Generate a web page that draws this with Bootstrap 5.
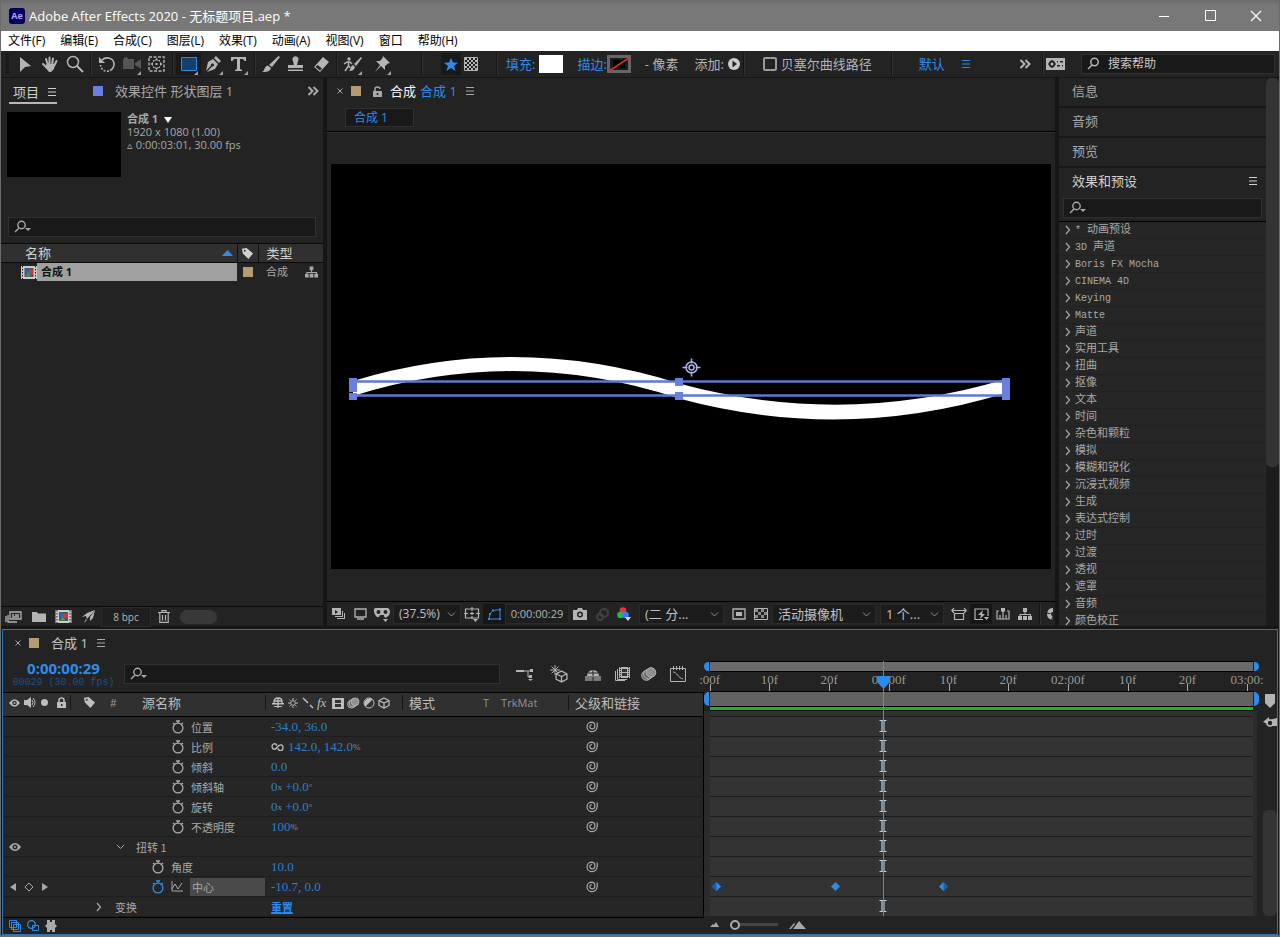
<!DOCTYPE html>
<html lang="zh-CN">
<head>
<meta charset="utf-8">
<meta name="viewport" content="width=device-width, initial-scale=1">
<title>Adobe After Effects 2020 - 无标题项目.aep *</title>
<link rel="stylesheet" href="https://cdn.jsdelivr.net/npm/bootstrap@5.3.0/dist/css/bootstrap.min.css">
<style>
:root{--panel:#232323;--gut:#161616;--well:#191919;--line:#0a0a0a;--txt:#a8a8a8;--hi:#d0d0d0;--blue:#2d8ceb;--num:#2c7fd0}
body{height:100vh;min-height:640px;overflow:hidden;background:var(--gut);color:var(--txt);border:solid #6c6c6c;border-width:0 1px 2px;font:13px/18px "Open Sans","Noto Sans CJK SC",sans-serif;font-weight:400}
button,input,select{font:inherit;color:inherit;background:none;border:0;padding:0;border-radius:0;outline:0}
svg{display:block;flex:none;fill:currentColor}
.ln{fill:none;stroke:currentColor}
a{color:inherit;text-decoration:none}
.titlebar{height:31px;background:linear-gradient(#6a6a6a,#787878 5px);color:#fff}
.aelogo{width:16px;height:16px;background:#00005b;color:#b0a0ff;border-radius:3px;font:bold 9px/16px "Open Sans",sans-serif}
.winbtn{width:46px;height:31px}
.menubar{height:20px;background:#fff;color:#000;font:12px/20px "Open Sans","Noto Sans CJK SC",sans-serif;gap:15px;padding-left:7px}
.toolbar{height:26px;background:var(--panel);color:#b4b4b4;margin-bottom:1px}
.tool{width:25px;height:22px;position:relative}
.tool.more::after{content:"";position:absolute;right:3px;bottom:0;border:solid transparent;border-width:0 0 4px 4px;border-bottom-color:#a0a0a0}
.tool.on{background:var(--well)}
.tool.tight{width:20px}
.tool.off{color:#555}
.vsep{flex:none;width:7px;height:22px;background:linear-gradient(90deg,transparent 3px,#151515 3px,#151515 4px,#323232 4px,#323232 5px,transparent 5px)}
.lnkblue{color:var(--blue)}
.swatch{width:24px;height:18px}
.tb-check{appearance:none;width:14px;height:14px;border:2px solid #999;border-radius:2px}
.well{background:var(--well);border:1px solid #303030;height:20px}
.well input{min-width:0;width:100%;height:18px}
.well input::placeholder{color:#c8c8c8;opacity:1}
.helpfind{width:194px;font-size:12px}
.workspace{min-height:0}
.pane{background:var(--panel)}
.project{width:322px}
.ptab{height:26px}
.sq{width:10px;height:10px;flex:none}
.tan{background:#b39c74}
.blu{background:#657fe2;margin-left:36px}
.curtab{height:22px;border-bottom:2px solid #b8b8b8;color:var(--hi)}
.thumb{width:114px;height:65px;background:#000}
.meta{font-size:11px;line-height:13px;padding-left:6px}
.projfind{margin:40px 7px 6px}
.ptable{width:100%;table-layout:fixed;border-collapse:collapse}
.ptable th{height:19px;background:#303030;border:solid var(--line);border-width:1px 0;font-weight:400;color:var(--hi);line-height:17px;padding:0}
.ptable td{height:19px;padding:0;font-size:11px;line-height:18px}
.ptable th+th{border-left:1px solid #111}
.c-name{width:236px}.c-tag{width:21px}.c-flow{width:18px}
.selname{background:#a0a0a0;color:#111;font-weight:700;height:18px}
.pfoot{height:20px;border-top:1px solid var(--line);color:#b4b4b4}
.icell{width:25px;height:19px}
.icell,.vcell,.tool,.winbtn{display:flex;align-items:center;justify-content:center;flex:none}
.blob{width:37px;height:14px;border-radius:7px;background:#383838}
.comptab{width:69px;height:19px;background:var(--well);border:1px solid #303030;font-size:12px;line-height:16px}
.comprow{padding:0 0 4px 18px}
.viewer{border-top:1px solid #000;min-height:0;box-shadow:inset 0 1px #303030}
.canvas{background:#000;width:100%;aspect-ratio:16/9}
.vfoot{height:25px;border-top:1px solid #000;color:#b4b4b4}
.vcell{width:22px;height:20px}
.vcell.on{background:#161616}
.vcell.off{color:#404040}
.vsel{height:20px;background:#1c1c1c url("data:image/svg+xml,%3Csvg xmlns='http://www.w3.org/2000/svg' width='9' height='5'%3E%3Cpath d='M1 .5l3.500 3.500 3.500-3.500' fill='none' stroke='%23909090'/%3E%3C/svg%3E") no-repeat right 4px center;border:1px solid #2b2b2b;appearance:none;padding-left:5px;color:#c0c0c0;line-height:18px;flex:none}
.w-mag{width:68px;font-size:12px}.w-res{width:85px}.w-cam{width:104px}.w-num{width:64px}
.tcbox{width:72px;height:20px;background:#1f1f1f;border:1px solid #2b2b2b;font-size:11px}
.bpc{width:50px;font-size:10px}
.rightcol{width:220px}
.prow{height:30px;padding:0 0 2px 13px;border-bottom:2px solid #171717}
.prow.cur{border:0;padding-bottom:4px;color:var(--hi)}
.fxfind{margin:0 4px 3px}
.fxlist{font:11px/16px "Liberation Mono","Noto Sans CJK SC",monospace;border-top:1px solid #000;min-height:0;flex-basis:0;background:#262626}
.fxlist li{height:17px;border-bottom:1px solid #212121;padding-left:6px;gap:4px;display:flex;align-items:center}
.en{font-size:10px;white-space:pre}
.sbar{width:13px;background:#1c1c1c}
.sthumb{background:#343434;border-radius:5px}
.sbar .sthumb{height:71%}
.timeline{margin:3px 1px 0;border:1px solid #2a72c0;background:var(--panel)}
.tleft{flex:0 0 55%;min-width:0}
.tctop{height:36px}
.tcwrap{width:121px}
.tcode{font:bold 15px/16px "Open Sans",sans-serif;color:var(--blue)}
.tsub{font:10px/13px "Liberation Mono",monospace;color:#1c5088}
.tics{color:#b4b4b4}
.tic{display:flex;justify-content:center;width:34px}
.tic.n{width:26px}
.trow{display:grid;grid-template-columns:67px 195px 137px 166px 1fr;height:20px;align-items:center;border-bottom:1px solid #1e1e1e;border-right:1px solid #000;background:#262626;font:11px/18px "Noto Sans CJK SC",sans-serif}
.trow>div{display:flex;align-items:center}
.thead{height:25px;background:#303030;border:solid #000;border-width:1px 1px 1px 0;padding-bottom:4px;font:13px/18px "Open Sans","Noto Sans CJK SC",sans-serif;color:#bdbdbd}
.thead>div+div{border-left:1px solid #161616;height:15px}
.nv{font:13px/18px "Liberation Serif",serif;color:var(--num);padding-left:6px;white-space:pre}
.nv small{font-size:9px;color:#8a8a8a}
.reset{font:bold 11px/18px "Noto Sans CJK SC",sans-serif;text-decoration:underline}
.tiny{font-size:11px;color:#939393}
.swi{gap:3px}
.fxi{width:12px;font:italic 13px/12px "Liberation Serif",serif}
.c-t{width:32px;padding-left:12px}.c-h{width:29px;padding-left:4px}
.c-n{padding-left:10px}
.l0{padding-left:26px;gap:13px}.l1{padding-left:46px;gap:11px}.l2{padding-left:82px;gap:7px}.l3{padding-left:102px;gap:7px}
.pick{padding-left:18px;color:#aaa}
.hl{background:#4a4a4a;height:18px;padding-left:2px}
.pl{padding-left:6px}
.tfoot{height:17px;border-top:1px solid #000;gap:6px}
.tright{padding-left:6px;min-width:0}
.tright .tfoot{border:0;gap:11px}
.nav-strip{height:11px;border:solid #000;border-width:1px 0;background:#6a6a6a;margin-top:31px}
.work{height:16px;border:solid #000;border-width:1px 0;background:#626262}
.nub{position:absolute;top:0;bottom:0;width:5px;background:var(--blue)}
.nub.s{left:-6px;border-radius:5px 0 0 5px}.nub.e{right:-6px;border-radius:0 5px 5px 0}
.ruler{height:19px;font:13px/16px "Liberation Serif",serif;color:#999}
.at{position:absolute;left:calc(var(--f)/91*100%);width:40px;margin-left:-20px;text-align:center}
.ruler .at::after{content:"";position:absolute;left:20px;top:12px;height:7px;width:1px;background:#aaa}
.green{height:4px;background:#22b030;border-bottom:1px solid #111}
.tracks{background:#333;box-shadow:-6px 0 #2c2c2c,4px 0 #2c2c2c;border-top:5px solid #303030}
.track{height:20px;border-top:1px solid #1d1d1d;position:relative}
.track svg{position:absolute;color:var(--blue)}
.track .beam{left:calc(29/91*100%);margin-left:-5px;top:2px;color:#b8cfe2}
.track .key{left:calc(var(--f)/91*100%);margin-left:-4px;top:5px}
.playhead{position:absolute;left:calc(29/91*100%);top:31px;bottom:0;width:1px;background:#3b93ea;z-index:2}
.playhead svg{position:absolute;left:-6px;top:15px;color:var(--blue)}
.tside{width:24px}
.marks{height:180px;padding-top:64px;gap:7px;color:#b4b4b4}
.tside .sthumb{width:14px;height:106px}
.zoomr{appearance:none;width:48px;height:10px}
.zoomr::-webkit-slider-runnable-track{height:3px;background:#454545}
.zoomr::-webkit-slider-thumb{appearance:none;width:10px;height:10px;border:2px solid #aaa;border-radius:50%;background:var(--panel);margin-top:-3px}
</style>
</head>
<body class="d-flex flex-column">
<svg width="0" height="0" class="position-absolute" aria-hidden="true"><defs>
<symbol id="menu" viewBox="0 0 10 10"><path d="M1 1h8v1H1zM1 4.500h8v1H1zM1 8h8v1H1z"/></symbol>
<symbol id="chev2" viewBox="0 0 12 10"><path class="ln" stroke-width="2" d="M1.500 1l4 4-4 4M6.500 1l4 4-4 4"/></symbol>
<symbol id="find" viewBox="0 0 18 14"><g class="ln" stroke-width="1.500"><circle cx="8.500" cy="5" r="3.700"/><path d="M6 8L2 12"/></g></symbol>
<symbol id="findm" viewBox="0 0 18 14"><g class="ln" stroke-width="1.400"><circle cx="8.500" cy="5" r="3.700"/><path d="M6 8L2 12"/></g><path d="M12 8h6l-3 3z"/></symbol>
<symbol id="tag" viewBox="0 0 14 14"><path d="M1 2l5-1 7 6-5 6-6-6zM4 3a1 1 0 100 2 1 1 0 000-2" fill-rule="evenodd"/></symbol>
<symbol id="film" viewBox="0 0 16 13"><path fill="#ccc" d="M0 0h16v13H0z"/><path stroke="#222" stroke-dasharray="1.500 1.500" d="M1.500 0v13M14.500 0v13"/><path fill="#555" d="M3.500 2h9v9h-9z"/><circle cx="6.500" cy="5" r="2.300" fill="#2767c5"/><path fill="#d33" d="M8 4h4v4H8z"/><path fill="#3a9b48" d="M7 6l3 4.500H4.500z"/></symbol>
<symbol id="tree" viewBox="0 0 14 12"><path d="M5 0h4v4H5zM0 8h4v4H0zM5 8h4v4H5zM10 8h4v4h-4zM6.500 4h1v2h5.500v2h-1V7H2.500v1h-1V6h5z"/></symbol>
<symbol id="watch" viewBox="0 0 12 14"><g class="ln" stroke-width="1.300"><circle cx="6" cy="8" r="4.900"/><path d="M4 1h4M6 1v2M1 3l2 1.500M11 3L9 4.500"/></g></symbol>
<symbol id="whorl" viewBox="0 0 12 12"><path class="ln" stroke-width="1.200" d="M11.200 1.500V5.500Q10.500 10.600 6 10.600A4.700 4.700 0 0 1 5.500 1.200Q8.800 1.200 8.800 4.500V5.500Q8.500 7.900 6.300 7.900T3.900 5.700 6 3.800"/></symbol>
<symbol id="right" viewBox="0 0 6 10"><path class="ln" stroke-width="1.200" d="M1 1l3.500 4L1 9"/></symbol>
<symbol id="down" viewBox="0 0 9 6"><path class="ln" d="M1 1l3.500 3.500L8 1"/></symbol>
<symbol id="eye" viewBox="0 0 12 8"><path fill-rule="evenodd" d="M0 4q6-8 12 0-6 8-12 0zM6 1.500a2.500 2.500 0 100 5 2.500 2.500 0 000-5"/><circle cx="6" cy="4" r="1"/></symbol>
<symbol id="balls" viewBox="0 0 16 14"><g stroke="currentColor" fill="#666"><circle cx="5.500" cy="8.500" r="4.800"/><circle cx="7.500" cy="7" r="4.800"/><circle cx="10" cy="5.500" r="4.800" fill="#909090"/></g></symbol>
<symbol id="frames" viewBox="0 0 15 14"><path d="M4 0h11v11H4z"/><path fill="#333" d="M7 2h5v3H7zM7 6h5v3H7z"/><path stroke="#333" stroke-dasharray="1 1" d="M5.500 0v11M13.500 0v11"/><path class="ln" d="M2.500 2v10.500H12M.5 4v9.500H10"/></symbol>
<symbol id="cube" viewBox="0 0 12 12"><path class="ln" stroke-width="1.200" d="M6 1l5 2.500v5L6 11 1 8.500v-5zM1 3.500L6 6l5-2.500M6 6v5"/></symbol>
<symbol id="beam" viewBox="0 0 10 14"><path class="ln" stroke-width="1.200" d="M1.500 1.500h7M1.500 12.500h7M4 2v10M6 2v10"/></symbol>
<symbol id="shy" viewBox="0 0 12 11"><path class="ln" stroke-width="1.300" d="M2 6V4.500Q2 1 6 1T10 4.500V6M6 1v10M2.500 4h7"/><path d="M0 6h12v1.500H0zM2 9h8v1H2z"/></symbol>
</defs></svg>

<header class="titlebar d-flex align-items-center flex-shrink-0">
  <span class="aelogo ms-2 text-center">Ae</span><span class="ms-1 flex-grow-1">Adobe After Effects 2020 - 无标题项目.aep *</span>
  <button class="winbtn" aria-label="最小化"><svg width="10" height="10"><path d="M0 5h10v1H0z"/></svg></button>
  <button class="winbtn" aria-label="最大化"><svg width="11" height="11"><path class="ln" d="M.5.5h10v10H.5z"/></svg></button>
  <button class="winbtn" aria-label="关闭"><svg width="12" height="12"><path class="ln" stroke-width="1.200" d="M1 1l10 10M11 1L1 11"/></svg></button>
</header>
<nav class="menubar d-flex flex-shrink-0"><a href="#">文件(F)</a><a href="#">编辑(E)</a><a href="#">合成(C)</a><a href="#">图层(L)</a><a href="#">效果(T)</a><a href="#">动画(A)</a><a href="#">视图(V)</a><a href="#">窗口</a><a href="#">帮助(H)</a></nav>

<div class="toolbar d-flex align-items-center flex-shrink-0">
  <svg width="11" height="22"><path stroke="#111" stroke-width="3" stroke-dasharray="1 1" d="M6.500 1v20"/></svg>
  <button class="tool" aria-label="选取"><svg width="12" height="17"><path d="M1 1l11 9-6 1-5 5z"/></svg></button>
  <button class="tool" aria-label="手形"><svg width="18" height="17"><g class="ln" stroke-width="2" stroke-linecap="round"><path d="M5 3l2 6M8.500 1.500V9M12 2.500L11 9M15.500 5L13 10M2 8l4 4"/></g><path d="M5.500 8h8.500l-1 5-3 3H8l-4-5z"/></svg></button>
  <button class="tool" aria-label="缩放"><svg width="18" height="18"><g class="ln" stroke-width="1.500"><circle cx="7" cy="7" r="5.500"/><path d="M11 11l6 6" stroke-width="2"/></g></svg></button>
  <span class="vsep"></span>
  <button class="tool" aria-label="旋转"><svg width="18" height="16"><path class="ln" stroke-width="1.600" d="M4 4c4-4 12-2 12 4 0 3-1 5-4 6.500"/><path class="ln" stroke-width="1.600" stroke-dasharray="2 1.500" d="M11 15c-4 1-8-1-8.500-6"/><path d="M1 1v6h6z"/></svg></button>
  <button class="tool more off" aria-label="摄像机"><svg width="18" height="14"><path d="M0 2h11v10H0zM12 6l6-4v10l-6-4z"/><circle cx="3" cy="2" r="2"/></svg></button>
  <button class="tool" aria-label="向后平移"><svg width="17" height="16"><path class="ln" stroke-dasharray="3 1.500" stroke-width="1.400" d="M1 1h15v14H1z"/><path d="M8.500 2l2 2.500h-4zM8.500 14l-2-2.500h4zM2.500 8L5 6v4zM14.500 8L12 6v4zM7.500 7h2v2h-2zM5 4l1.500 1.500M5 4h2L5 6zM12 4v2l-2-2zM5 12v-2l2 2zM12 12h-2l2-2z"/></svg></button>
  <span class="vsep"></span>
  <button class="tool more on" aria-label="矩形"><svg width="16" height="14"><path fill="#123f6b" stroke="#2d8ceb" d="M.5.5h15v13H.5z"/></svg></button>
  <button class="tool more" aria-label="钢笔"><svg width="17" height="17"><path d="M11 0l5 5-2 2-5-5zM8 3l5 5-3 5-8 3 5-5.500a1.500 1.500 0 10-1-1L1 15l2-9z"/></svg></button>
  <button class="tool more" aria-label="文字"><svg width="15" height="16"><path d="M0 1h15v4h-1.500L12 3H9v10l2 1v1H4v-1l2-1V3H3L1.500 5H0z"/></svg></button>
  <span class="vsep"></span>
  <button class="tool" aria-label="画笔"><svg width="18" height="17"><path d="M16.500 0L18 1 10 11 7 9zM6 9.500L9 12c-1 4-5 4-9 4 3-1 2-6 6-6.500"/></svg></button>
  <button class="tool" aria-label="图章"><svg width="17" height="16"><path d="M6 5a3 3 0 115 0l-1 4h6v3H1V9h6zM1 13.500h15V15H1z"/></svg></button>
  <button class="tool" aria-label="橡皮擦"><svg width="18" height="17"><path d="M11 1l6 5-9 10-6-5zM3.500 11l4.500 3.500 2-2L5.500 9z" fill-rule="evenodd"/></svg></button>
  <span class="vsep"></span>
  <button class="tool more" aria-label="Roto 笔刷"><svg width="19" height="17"><path d="M18 1l1 1-6 8-2-2zM10 9l2 2c-1 4-4 4-6 4 2-1 1-5 4-6"/><circle cx="6" cy="3" r="1.700"/><path class="ln" stroke-width="1.500" d="M1 8l3-2h3l2 2M5.500 6v4L2 15M6 10l1 2"/></svg></button>
  <button class="tool more ms-1" aria-label="人偶位控点"><svg width="16" height="16"><path d="M9 0l7 7-2 .5L11 10v4L7 10l-6 6 5-7-4-4h4l2.500-3z"/></svg></button>
  <span class="vsep ms-4"></span>
  <button class="tool on tight ms-3 lnkblue" aria-label="形状"><svg width="14" height="13"><path d="M7 0l2 4.500 5 .2-4 3.200 1.500 5L7 10l-4.500 3 1.500-5L0 4.700l5-.2z"/></svg></button>
  <button class="tool tight me-1" aria-label="蒙版"><svg width="14" height="14"><path class="ln" d="M.5.5h13v13H.5z"/><path class="ln" stroke-width="2" stroke-dasharray="2 2" d="M1 2h12M3 4h12M1 6h12M3 8h10M1 10h12M3 12h10"/></svg></button>
  <span class="vsep ms-2"></span>
  <a href="#" class="lnkblue pl">填充:</a><span class="swatch bg-white ms-1"></span>
  <a href="#" class="lnkblue pl ms-2">描边:</a><svg width="24" height="18"><path fill="#1b1b1b" stroke="#666" stroke-width="3" d="M1.500 1.500h21v15h-21z"/><path fill="#000" d="M6 5h12v8H6z"/><path stroke="#c33" stroke-width="1.500" d="M2 16L22 3"/></svg>
  <span class="pl ms-2">- 像素</span><span class="ms-3">添加:</span>
  <button class="ms-1" aria-label="添加"><svg width="12" height="12"><circle cx="6" cy="6" r="6" fill="#ccc"/><path fill="#222" d="M4.500 2.500v7L9 6z"/></svg></button><span class="vsep"></span>
  <input type="checkbox" class="tb-check ms-3 me-1" id="bez"><label for="bez">贝塞尔曲线路径</label>
  <span class="vsep ms-3"></span>
  <a href="#" class="lnkblue ms-4">默认</a><svg class="lnkblue ms-3" width="10" height="10"><use href="#menu"/></svg>
  <span class="flex-grow-1"></span>
  <svg width="12" height="10"><use href="#chev2"/></svg><span class="vsep ms-2"></span>
  <svg width="19" height="12"><path fill-rule="evenodd" d="M0 0h19v12H0zM6 2L4 3 2 6l2 3 2 1 2-1 2-3-2-3zM11 3v1.500h6V3zM11 7v1.500h6V7z"/><circle cx="6" cy="6" r="1.500"/><path d="M12 2h2v4h-2zM14 6h2v4h-2z"/></svg>
  <div class="well helpfind d-flex align-items-center mx-2 me-1 ms-3 ps-1"><svg width="18" height="14"><use href="#find"/></svg><input class="ps-1" aria-label="搜索帮助" placeholder="搜索帮助"></div>
</div>

<main class="workspace d-flex flex-grow-1">
  <section class="project d-flex flex-column flex-shrink-0 pane me-1">
    <div class="ptab d-flex align-items-center">
      <a href="#" class="curtab d-flex align-items-center ms-2 ps-1 mt-1">项目<svg class="ms-2" width="10" height="10"><use href="#menu"/></svg></a>
      <span class="sq blu me-2"></span><a href="#" class="ms-1 flex-grow-1">效果控件 形状图层 1</a>
      <svg class="me-1" width="12" height="10"><use href="#chev2"/></svg>
    </div>
    <div class="d-flex pl pt-2">
      <div class="thumb"></div>
      <div class="meta"><div class="fw-bold">合成 1 &nbsp;<svg class="d-inline" width="8" height="6"><path fill="#fff" d="M0 0h8L4 6z"/></svg></div><div>1920 x 1080 (1.00)</div><div>▵ 0:00:03:01, 30.00 fps</div></div>
    </div>
    <div class="well projfind d-flex align-items-center ps-1"><svg width="18" height="14"><use href="#findm"/></svg><input aria-label="搜索项目"></div>
    <table class="ptable"><colgroup><col class="c-name"><col class="c-tag"><col><col class="c-flow"></colgroup>
      <tr><th class="ps-4"><span class="d-flex align-items-center justify-content-between pe-1">名称<svg width="11" height="6"><path fill="#2d8ceb" d="M0 6l5.500-6L11 6z"/></svg></span></th><th><svg class="mx-auto" width="13" height="13"><use href="#tag"/></svg></th><th colspan="2" class="ps-2">类型</th></tr>
      <tr><td><span class="d-flex align-items-center ps-3"><svg class="ms-1" width="16" height="13"><use href="#film"/></svg><span class="selname flex-grow-1 ps-1">合成 1</span></span></td><td><span class="sq tan d-block mx-auto"></span></td><td class="ps-2">合成</td><td><svg width="13" height="12"><use href="#tree"/></svg></td></tr>
    </table>
    <div class="flex-grow-1"></div>
    <div class="pfoot d-flex align-items-center">
      <button class="icell" aria-label="解释素材"><svg width="17" height="12"><path class="ln" stroke-width="1.300" d="M5 1h11v7H5zM7 4h2M10 4h4M7 6h7M3 4v7h9M1 5v6"/></svg></button>
      <button class="icell" aria-label="新建文件夹"><svg width="14" height="10"><path d="M0 0h5l1 1.500h8V10H0z"/></svg></button>
      <button class="icell" aria-label="新建合成"><svg width="17" height="13"><use href="#film"/></svg></button>
      <button class="icell" aria-label="代理"><svg width="13" height="13"><path d="M13 0L5 9 4 6 0 7l5-4zM13 0l-2 8-3 3V7zM4 9l1 1-3 3z"/></svg></button>
      <button class="tcbox bpc">8 bpc</button>
      <button class="icell" aria-label="删除"><svg width="12" height="13"><path class="ln" stroke-width="1.200" d="M0 2.500h12M4 2V.6h4V2M1.800 3v9.300h8.400V3M4.500 5v5.500M7.500 5v5.500"/></svg></button>
      <span class="blob ms-1"></span>
    </div>
  </section>

  <section class="d-flex flex-column flex-fill pane overflow-hidden">
    <div class="ptab d-flex align-items-center pl ms-1">
      <button aria-label="关闭"><svg width="6" height="6"><path class="ln" d="M.5.5l5 5M5.500.5l-5 5"/></svg></button><span class="sq tan ms-2 me-2"></span>
      <svg class="mx-1 me-2" width="9" height="11"><path fill-rule="evenodd" d="M0 5h9v6H0zM3.700 7v2h1.600V7z"/><path class="ln" stroke-width="1.500" d="M2 5V3q0-2 2.500-2T7 3"/></svg>
      <span class="text-light">合成</span><a href="#" class="lnkblue ms-1">合成 1</a><svg class="ms-2" width="10" height="10"><use href="#menu"/></svg>
    </div>
    <div class="comprow"><button class="comptab lnkblue text-start ps-2 d-block mt-1">合成 1</button></div>
    <div class="viewer flex-grow-1 d-flex align-items-center px-1">
      <svg class="canvas" viewBox="0 0 720 405">
        <path fill="#fff" d="M22 217Q185 168 348 219.500Q512 264 675 215V229Q512 279 348 234.500Q185 181 22 232z"/>
        <path fill="none" stroke="#6078d4" stroke-width="2.500" d="M22 217.500h653M22 231.500h653"/>
        <path fill="#6880e0" d="M18 214h8v14h-8zM18 229h8v7h-8zM344 214h8v8h-8zM344 228h8v8h-8zM671 214h8v22h-8z"/>
        <g stroke="#aab4e8" fill="none" stroke-width="1.500"><circle cx="360.500" cy="203.500" r="5.500"/><circle cx="360.500" cy="203.500" r="2.500"/><path d="M360.500 194.500v5M360.500 207.500v5M351.500 203.500h5M364.500 203.500h5"/></g>
      </svg>
    </div>
    <div class="vfoot d-flex align-items-center overflow-hidden">
      <button class="vcell" aria-label="始终预览"><svg width="13" height="12"><path d="M0 0h9v7H0zM10 3h1v6H3V8h7zM12 5h1v6H5v-1h7z"/><path fill="#222" d="M3 2v4l3-2z"/></svg></button>
      <button class="vcell" aria-label="主查看器"><svg width="13" height="12"><path class="ln" stroke-width="1.300" d="M1 1h11v8H1zM3 11h7"/></svg></button>
      <button class="vcell" aria-label="VR"><svg width="16" height="15"><path fill-rule="evenodd" d="M2 1h12q2 1 2 4t-3 5-3-2H6q-1 3-3 2T0 5t2-4zM4.500 3a2 2 0 100 4 2 2 0 000-4M11.500 3a2 2 0 100 4 2 2 0 000-4M9 12h5l-2.500 3z"/></svg></button>
      <select class="vsel w-mag" aria-label="放大率"><option>(37.5%)</option></select>
      <button class="vcell" aria-label="网格"><svg width="16" height="15"><path class="ln" stroke-width="1.200" d="M1.500 2h13v9h-13zM8 0v4M8 9v3M0 6.500h4M12 6.500h4M6 6.500h4M8 5v3"/><path d="M9 12h5l-2.500 3z"/></svg></button>
      <button class="vcell on lnkblue" aria-label="蒙版"><svg width="15" height="13"><path class="ln" d="M2 11L3 6 6 2.500l7-1V11z"/><path d="M1 10h2v2H1zM2 5h2v2H2zM5 1.500h2v2H5zM12 .5h2v2h-2zM12 10h2v2h-2z"/></svg></button>
      <button class="tcbox">0:00:00:29</button>
      <button class="vcell" aria-label="快照"><svg width="14" height="12"><path fill-rule="evenodd" d="M0 2h4l1-2h4l1 2h4v10H0zM7 3.500a3 3 0 100 6 3 3 0 000-6"/><circle cx="7" cy="6.500" r="1.500"/></svg></button>
      <button class="vcell off" aria-label="显示快照"><svg width="14" height="13"><g class="ln" stroke-width="2"><circle cx="9" cy="5" r="4"/><circle cx="5" cy="9" r="3"/></g></svg></button>
      <button class="vcell" aria-label="通道"><svg width="14" height="14"><circle cx="6" cy="3.500" r="3.300" fill="#e33"/><circle cx="3.500" cy="8" r="3.300" fill="#2b4"/><circle cx="8.500" cy="8" r="3.300" fill="#47f"/><path fill="#ddd" d="M8 10h6l-3 4z"/></svg></button>
      <select class="vsel w-res ms-1" aria-label="分辨率"><option>(二 分...</option></select>
      <button class="vcell ms-1" aria-label="目标区域"><svg width="14" height="12"><path class="ln" stroke-width="1.300" d="M1 1h12v10H1z"/><path d="M4 4h6v4H4z"/></svg></button>
      <button class="vcell" aria-label="透明网格"><svg width="14" height="12"><path class="ln" d="M.5.500h13v11H.5z"/><path d="M1 1h3v3H1zM7 1h3v3H7zM4 4h3v3H4zM10 4h3v3h-3zM1 7h3v3H1zM7 7h3v3H7z" opacity=".7"/></svg></button>
      <select class="vsel w-cam" aria-label="视图"><option>活动摄像机</option></select>
      <select class="vsel w-num ms-1" aria-label="视图数"><option>1 个...</option></select>
      <button class="vcell ms-1" aria-label="像素长宽比"><svg width="16" height="12"><path class="ln" stroke-width="1.200" d="M3.500 5.500h9v6h-9zM1 2.500h14M3 0L.8 2.500 3 5M13 0l2.200 2.500L13 5"/></svg></button>
      <button class="vcell on" aria-label="快速预览"><svg width="15" height="13"><path class="ln" stroke-width="1.200" d="M9 11.500H1V1h13v7"/><path d="M9 2L4 7h3l-1 4 5-5H8zM10 9h5l-2.500 3z"/></svg></button>
      <button class="vcell" aria-label="时间轴"><svg width="14" height="12"><path class="ln" stroke-width="1.200" d="M3 3H1v8h12V3h-2M4 7v4M7 5v6M10 7v4"/><path d="M5 0h4v3L7 5 5 3z"/></svg></button>
      <button class="vcell" aria-label="流程图"><svg width="14" height="12"><use href="#tree"/></svg></button>
      <span class="vsep"></span><svg width="12" height="12"><path class="ln" stroke-width="4" stroke-dasharray="5 1" d="M10 2a4 4 0 100 8"/></svg>
    </div>
  </section>

  <section class="rightcol d-flex flex-shrink-0 ms-1">
    <div class="pane d-flex flex-column flex-grow-1">
      <a href="#" class="prow d-flex align-items-center">信息</a><a href="#" class="prow d-flex align-items-center">音频</a><a href="#" class="prow d-flex align-items-center">预览</a>
      <a href="#" class="prow cur d-flex align-items-center justify-content-between">效果和预设<svg class="me-2" width="10" height="10"><use href="#menu"/></svg></a>
      <div class="well fxfind d-flex align-items-center ps-1"><svg width="18" height="14"><use href="#findm"/></svg><input aria-label="搜索效果"></div>
      <ul class="fxlist list-unstyled flex-grow-1 overflow-hidden mb-0" id="fx"></ul>
    </div>
    <div class="sbar"><div class="sthumb"></div></div>
  </section>
</main>

<section class="timeline d-flex flex-shrink-0">
  <div class="tleft d-flex flex-column">
    <div class="d-flex align-items-center ps-2 ptab">
      <button class="ms-1" aria-label="关闭"><svg width="6" height="6"><path class="ln" d="M.5.5l5 5M5.500.5l-5 5"/></svg></button><span class="sq tan ms-2 me-2"></span><span class="ms-1 text-light opacity-75">合成 1</span><svg class="ms-2" width="10" height="10"><use href="#menu"/></svg>
    </div>
    <div class="tctop d-flex align-items-center">
      <div class="text-center tcwrap"><div class="tcode">0:00:00:29</div><div class="tsub">00029 (30.00 fps)</div></div>
      <div class="well d-flex align-items-center flex-grow-1 ps-1 me-2"><svg width="18" height="14"><use href="#findm"/></svg><input aria-label="搜索图层"></div>
      <div class="tics d-flex align-items-center me-2">
        <span class="tic"><svg width="18" height="13"><path d="M0 2h8v2H0z"/><path class="ln" d="M8 3h4v6h4M12 3h4"/><path d="M14 1h3v3h-3zM13 7h3v3h-3zM12 11h5l-2.500 2z"/></svg></span>
        <span class="tic"><svg width="18" height="18"><path class="ln" d="M5 0v10M0 5h10M1.500 1.500l7 7M8.500 1.500l-7 7"/><svg x="5" y="5" width="13" height="13"><use href="#cube"/></svg></svg></span>
        <span class="tic"><svg width="16" height="13"><path d="M2 8a6 6 0 0112 0z"/><path opacity=".6" d="M0 8h16v5H0z"/><path stroke="#222" d="M8 2v6M3 5h10M8 9v4"/></svg></span>
        <span class="tic n"><svg width="15" height="14"><use href="#frames"/></svg></span>
        <span class="tic n"><svg width="16" height="14"><use href="#balls"/></svg></span>
        <span class="tic"><svg width="17" height="16"><path class="ln" d="M.5 2.500h15v13H.5zM3.500 0v4M6.500 0v4M9.500 0v4M12.500 0v4M3 6c4 0 5 6 10 7"/></svg></span>
      </div>
    </div>
    <div class="trow thead">
      <div class="pl gap-1"><svg width="11" height="8"><use href="#eye"/></svg><svg width="12" height="11"><path d="M0 3h3l4-3v11L3 8H0z"/><path class="ln" d="M8 3q2 2.500 0 5M9 1q4 4.500 0 9"/></svg><svg width="9" height="9"><circle cx="4.500" cy="4.500" r="3.500"/></svg><svg class="ms-1" width="9" height="11"><path fill-rule="evenodd" d="M0 5h9v6H0zM4 7v2h1.500V7z"/><path class="ln" stroke-width="1.500" d="M2 5V3q0-2 2.500-2T7 3v2"/></svg></div>
      <div><span class="c-t"><svg width="13" height="13"><use href="#tag"/></svg></span><span class="c-h tiny">&nbsp;#</span><span class="c-n">源名称</span></div>
      <div class="pl swi"><svg width="12" height="11"><use href="#shy"/></svg><svg width="12" height="12"><circle class="ln" cx="6" cy="6" r="2.300"/><path class="ln" d="M6 1v2M6 9v2M1 6h2M9 6h2M2.500 2.500l1.200 1.200M8.300 8.300l1.200 1.200M9.500 2.500L8.300 3.700M2.500 9.500l1.200-1.200"/></svg><svg width="12" height="12"><path class="ln" stroke-width="1.500" d="M1 1l5 5M8 8l3 3"/></svg><i class="fxi">fx</i><svg width="12" height="12"><path d="M0 1h12v11H0z"/><path fill="#333" d="M3 3h6v3H3zM3 7h6v3H3z"/></svg><svg width="13" height="12"><use href="#balls"/></svg><svg width="12" height="12"><circle class="ln" cx="6" cy="6" r="5"/><path d="M9.500 2.500A5 5 0 002.500 9.500z"/></svg><svg width="12" height="12"><use href="#cube"/></svg></div>
      <div class="pl">模式<span class="ms-5 tiny">T</span><span class="ps-2 ms-1 tiny">TrkMat</span></div>
      <div class="pl">父级和链接</div>
    </div>
    <div id="rows"></div>
    <div class="tfoot d-flex align-items-center lnkblue pl">
      <svg width="12" height="12"><path class="ln" d="M.5.500h7v7h-7zM2.500 2.500h7v7h-7zM4.500 4.500h7v7h-7z"/></svg>
      <svg width="12" height="12"><circle class="ln" stroke-width="1.300" cx="4.500" cy="4.500" r="3.800"/><path class="ln" d="M5.500 5.500h6v5h-6z"/></svg>
      <svg width="12" height="12"><path fill="#aaa" d="M2 0h3v2h2V0h3v4l2 2-2 2v4H7v-2H5v2H2V8L0 6l2-2z"/></svg>
    </div>
  </div>
  <div class="tright flex-grow-1 d-flex flex-column">
    <div class="position-relative">
      <div class="nav-strip position-relative"><span class="nub s"></span><span class="nub e"></span></div>
      <div class="ruler position-relative" id="ruler"></div>
      <div class="work position-relative"><span class="nub s"></span><span class="nub e"></span></div>
      <div class="green"></div>
      <div class="tracks" id="tracks"></div>
      <div class="playhead"><svg width="13" height="13"><path d="M0 0h13v6l-6.500 7L0 6z"/></svg></div>
    </div>
    <div class="tfoot d-flex align-items-center">
      <svg width="9" height="5"><path d="M0 5l3-3 1 1 2-3 3 5z"/></svg>
      <input type="range" class="zoomr" min="0" max="100" value="0" aria-label="时间轴缩放">
      <svg width="17" height="8"><path d="M0 8l5-6 1 1-4 5zM4 8l6-8 7 8z"/></svg>
    </div>
  </div>
  <div class="tside d-flex flex-column align-items-end">
    <div class="marks d-flex flex-column align-items-center"><svg width="12" height="14"><path d="M1 0h10v9l-5 5-5-5z"/></svg><svg width="14" height="13"><path d="M0 7l6-5v3l8-2v8H9z"/><circle cx="7" cy="8" r="3" fill="#222" stroke="#bbb" stroke-width="1.500"/></svg></div>
    <div class="sthumb"></div>
  </div>
</section>

<script>
const ic=(n,w,h,c='')=>`<svg class="${c}" width="${w}" height="${h}"><use href="#${n}"/></svg>`;
const fx=['* 动画预设','3D 声道','Boris FX Mocha','CINEMA 4D','Keying','Matte','声道','实用工具','扭曲','抠像','文本','时间','杂色和颗粒','模拟','模糊和锐化','沉浸式视频','生成','表达式控制','过时','过渡','透视','遮罩','音频','颜色校正'];
document.getElementById('fx').innerHTML=fx.map(t=>`<li>${ic('right',6,10)}<span>${t.replace(/[\x20-\x7e]+/g,m=>`<span class="en">${m}</span>`)}</span></li>`).join('');
const w=ic('watch',12,14),rows=[
 ['','l3',w+'位置','-34.0, 36.0',1],
 ['','l3',w+'比例','<svg class="me-1" width="13" height="8"><path fill="none" stroke="#bbb" stroke-width="1.400" d="M6 2.500C4-.5 1 1 1 3.500s3 4 5 1 6-4 6 0-4 4-5 1"/></svg>142.0, 142.0<small>%</small>',1],
 ['','l3',w+'倾斜','0.0',1],
 ['','l3',w+'倾斜轴','0<small>x</small> +0.0<small>°</small>',1],
 ['','l3',w+'旋转','0<small>x</small> +0.0<small>°</small>',1],
 ['','l3',w+'不透明度','100<small>%</small>',1],
 [ic('eye',12,8),'l1',ic('down',9,6)+'扭转 1','',0],
 ['','l2',w+'角度','10.0',1],
 ['<svg width="42" height="10"><path d="M7 1v8L1 5zM33 1v8l6-4z"/><path class="ln" d="M20 1l4 4-4 4-4-4z"/></svg>','l2',`<span class="lnkblue">${w}</span><svg width="12" height="11"><path class="ln" d="M1 0v10h11M1 8l3-5 3 5 4-6"/></svg><span class="hl flex-grow-1">中心</span>`,'-10.7, 0.0',1],
 ['','l0',ic('right',6,10)+'变换','<a href="#" class="lnkblue reset">重置</a>',0]];
document.getElementById('rows').innerHTML=rows.map(r=>`<div class="trow"><div class="pl">${r[0]}</div><div class="${r[1]}">${r[2]}</div><div class="nv">${r[3]}</div><div></div><div class="pick">${r[4]?ic('whorl',12,12):''}</div></div>`).join('');
document.getElementById('ruler').innerHTML=[':00f','10f','20f','01:00f','10f','20f','02:00f','10f','20f','03:00:'].map((t,i)=>`<span class="at" style="--f:${i*10}">${t}</span>`).join('');
const keys=[[1,'M4.500 0v9L0 4.500z'],[21,''],[39,'M4.500 0v9L9 4.500z']];
document.getElementById('tracks').innerHTML=rows.map((r,i)=>`<div class="track">${i===8?keys.map(k=>`<svg class="key" style="--f:${k[0]}" width="9" height="9"><path d="M4.500 0L9 4.500 4.500 9 0 4.500z"/><path fill="#1a5fa8" d="${k[1]}"/></svg>`).join(''):ic('beam',10,14,'beam')}</div>`).join('');
</script>
<script src="https://cdn.jsdelivr.net/npm/bootstrap@5.3.0/dist/js/bootstrap.bundle.min.js"></script>
</body>
</html>
